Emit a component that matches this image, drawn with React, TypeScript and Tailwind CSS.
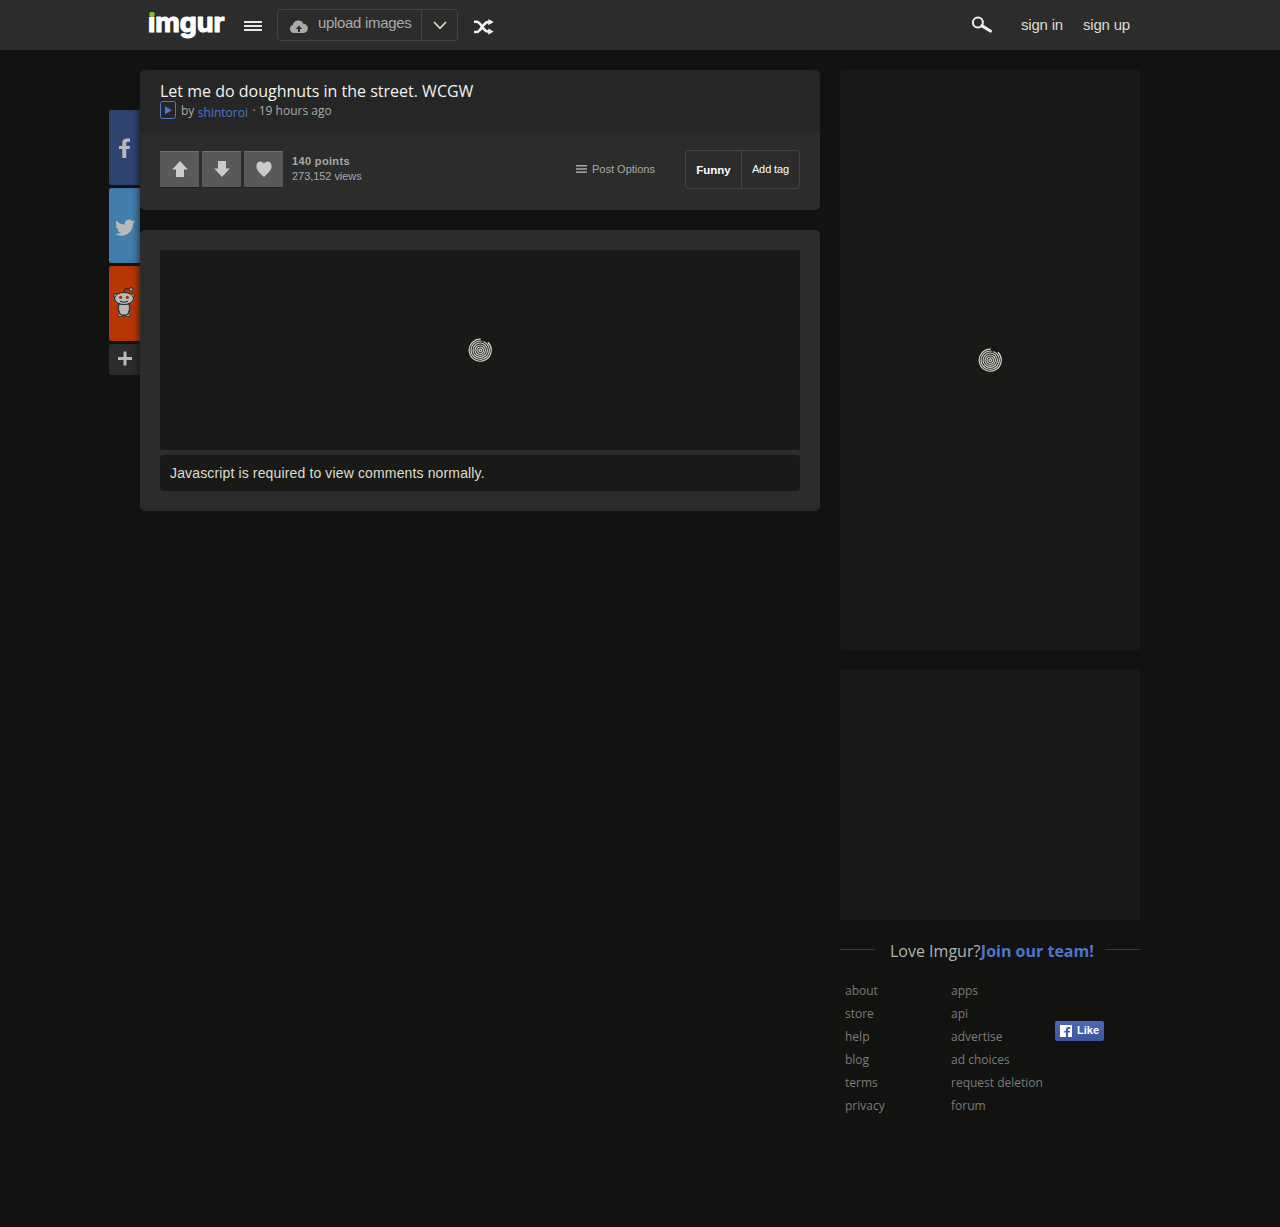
import type { ReactNode } from 'react';

const ABOUT_LINKS = ['about', 'store', 'help', 'blog', 'terms', 'privacy'];
const SITE_LINKS = ['apps', 'api', 'advertise', 'ad choices', 'request deletion', 'forum'];

const SPINNER_RINGS = [1.3, 3.2, 5.2, 7.2, 9.2];

function Logo() {
  return (
    <svg className="w-[76px] h-[30px] overflow-visible" viewBox="0 0 76 30" role="img" aria-label="imgur">
      <text
        x="-1"
        y="21.5"
        textLength="76.5"
        lengthAdjust="spacingAndGlyphs"
        className="font-['Inter',sans-serif] font-bold text-[26px] fill-white stroke-white stroke-[1.2px]"
        strokeLinejoin="round"
      >
        imgur
      </text>
      <rect x="-1" y="-2" width="8" height="9" fill="#2c2c2c" />
      <circle cx="3" cy="4.4" r="2.7" fill="#85bf25" />
    </svg>
  );
}

function Spinner() {
  return (
    <svg className="w-6 h-6" viewBox="-.5 -.5 24 24" fill="none" stroke="#d3d3c6" strokeWidth="1.2">
      {SPINNER_RINGS.map((r) => (
        <circle key={r} cx="11.7" cy="11.7" r={r} />
      ))}
      {/* Outer ring is left open at the top right */}
      <path d="M12.2 .7a11 11 0 1 0 7.2 3.1" />
      <path d="M13.2 2.9l2.2-1.8" stroke="#191918" strokeWidth="2" />
    </svg>
  );
}

function Header() {
  return (
    <header className="h-[50px] bg-[#2c2c2c]">
      <div className="w-[1000px] mx-auto h-full flex items-start">
        <div className="ml-[9px] mt-[10px]">
          <Logo />
        </div>
        <svg className="w-[18px] h-[10px] ml-[19px] mt-[21px]" viewBox="0 0 18 10" fill="#ebe8e8">
          <rect width="18" height="2" rx=".5" />
          <rect y="4" width="18" height="2" rx=".5" />
          <rect y="8" width="18" height="2" rx=".5" />
        </svg>
        <div className="ml-[15px] mt-[9px] w-[181px] h-8 flex border border-[#444442] rounded-[4px]">
          <div className="flex w-[144px] border-r border-[#444442]">
            <svg className="w-[18px] h-[13px] ml-3 mt-[9.5px] shrink-0" viewBox="0 0 18 13">
              <path
                d="M4.2 13A4.1 4.1 0 0 1 2.8 5 5.6 5.6 0 0 1 13.4 3.7 4.7 4.7 0 0 1 14 13Z"
                fill="#a9a9a7"
              />
              <path d="M9 5.4L12.2 9H10v3H8V9H5.8Z" fill="#2c2c2c" />
            </svg>
            <span className="ml-[10px] mt-[3px] text-[15px] leading-5 tracking-[-0.32px] text-[#a9a9a7] whitespace-nowrap">
              upload images
            </span>
          </div>
          <svg className="w-[14px] h-[9px] ml-[10.5px] mt-[11px]" viewBox="0 0 14 9" fill="none">
            <path d="M1 1l6 6.4L13 1" stroke="#dddfcb" strokeWidth="1.6" />
          </svg>
        </div>
        <svg className="w-5 h-4 ml-4 mt-[19px]" viewBox="0 0 20 16" fill="none" stroke="#f2f2f2" strokeWidth="2.6">
          <path d="M0 2.8h2.5c4.8 0 6.2 9.7 11.5 9.7h1" />
          <path d="M0 13h2.5C7.3 13 8.7 3.1 14 3.1h1" />
          <path d="M14.3 0l5.4 3-5.4 3.2zM14.3 9.6l5.4 3-5.4 3.2z" fill="#f2f2f2" stroke="none" />
        </svg>
        <svg className="w-[22px] h-[18px] ml-[477px] mt-[16px]" viewBox="0 0 22 18" fill="none" stroke="#efefef">
          <circle cx="6.9" cy="6.6" r="5" strokeWidth="2" />
          <path d="M11 9.8l8.4 5.2" strokeWidth="3.2" strokeLinecap="round" />
        </svg>
        <nav className="flex gap-5 ml-auto mr-[10px] mt-[15px] text-[15px] leading-5 tracking-[-0.2px] text-[#dddfcb]">
          <a>sign in</a>
          <a>sign up</a>
        </nav>
      </div>
    </header>
  );
}

function ShareTile({ className, children }: { className: string; children: ReactNode }) {
  return (
    <a
      className={`w-[31px] flex justify-center items-center rounded-l-[2px] shadow-[inset_-6px_0_6px_-4px_rgba(0,0,0,0.5)] ${className}`}
    >
      {children}
    </a>
  );
}

function ShareBar() {
  return (
    <aside className="flex flex-col gap-[3px] mt-10 w-[31px] shrink-0">
      <ShareTile className="h-[75px] bg-[#2f4371]">
        <svg className="w-[11px] h-[20px] mt-px" viewBox="0 0 10 20" fill="#b9b9b9" preserveAspectRatio="none">
          <path d="M3 20v-9H0V8h3V5.2C3 2 4.5.5 7.2.5H10v3.2H8.1C7 3.7 6.6 4.2 6.6 5.3V8H10l-.5 3H6.6v9z" />
        </svg>
      </ShareTile>
      <ShareTile className="h-[75px] bg-[#417eac]">
        <svg className="w-[20px] h-[17px] mt-[4px]" viewBox="0 1.5 24 20.5" fill="#b9b9b9" preserveAspectRatio="none">
          <path d="M23.954 4.569a10 10 0 0 1-2.825.775 4.958 4.958 0 0 0 2.163-2.723c-.951.555-2.005.959-3.127 1.184a4.92 4.92 0 0 0-8.384 4.482C7.691 8.094 4.066 6.13 1.64 3.161a4.822 4.822 0 0 0-.666 2.475c0 1.71.87 3.213 2.188 4.096a4.904 4.904 0 0 1-2.228-.616v.061a4.923 4.923 0 0 0 3.946 4.827 4.996 4.996 0 0 1-2.212.085 4.937 4.937 0 0 0 4.604 3.417 9.868 9.868 0 0 1-6.102 2.105c-.39 0-.779-.023-1.17-.067a13.995 13.995 0 0 0 7.557 2.209c9.054 0 13.999-7.496 13.999-13.986 0-.209 0-.42-.015-.63a9.936 9.936 0 0 0 2.46-2.548z" />
        </svg>
      </ShareTile>
      <ShareTile className="h-[75px] bg-[#b93606]">
        <svg className="w-[22px] h-[30px] -mt-[4px] -ml-px" viewBox="0 0 22 30" fill="#b9b9b9" stroke="#222" strokeWidth="1">
          <path d="M11 5.8l1.2-4.5 4.4 1" fill="none" stroke="#3a1a10" />
          <circle cx="18" cy="2.4" r="1.7" />
          <circle cx="3" cy="9" r="2.3" />
          <circle cx="19" cy="9" r="2.3" />
          <ellipse cx="7.6" cy="28" rx="3.3" ry="1.4" />
          <ellipse cx="14.4" cy="28" rx="3.3" ry="1.4" />
          <path d="M6 17c-2.4 1.5-2.5 5.5-.2 7M16 17c2.4 1.5 2.5 5.5.2 7" />
          <path d="M6 17h10c1 4 .4 8-2 11H8c-2.4-3-3-7-2-11z" />
          <ellipse cx="11" cy="11.5" rx="9.4" ry="6" />
          <circle cx="7.6" cy="10.3" r="1.6" fill="#b3220b" stroke="none" />
          <circle cx="14.4" cy="10.3" r="1.6" fill="#b3220b" stroke="none" />
          <path d="M7 14.2q4 2.2 8 0" fill="none" />
        </svg>
      </ShareTile>
      <ShareTile className="h-[31px] bg-[#2c2c2c]">
        <svg className="w-[14px] h-[15px] -mt-[2px] ml-px" viewBox="0 0 14 15" fill="none" stroke="#b9b9b9" strokeWidth="3">
          <path d="M7 .5v14M0 7.5h14" />
        </svg>
      </ShareTile>
    </aside>
  );
}

function VoteButton({ path }: { path: string }) {
  return (
    <button className="w-[39px] h-9 flex items-center justify-center bg-[#595959] border-t border-[#707070] rounded-[1px] shadow-[0_1px_0_#222]">
      <svg className="w-4 h-4 -mt-[2px]" viewBox="0 0 16 16" fill="#cbcbcb">
        <path d={path} />
      </svg>
    </button>
  );
}

function PostCard() {
  return (
    <section className="h-[140px] bg-[#2c2c2c] rounded-[5px] overflow-hidden">
      <div className="h-[62px] pl-5 pt-[10px] bg-[#262626] shadow-[0_0_3px_rgba(0,0,0,0.2)] font-['Open_Sans',sans-serif]">
        <h1 className="text-[16px] leading-[22px] text-[#f2f2f2]">Let me do doughnuts in the street. WCGW</h1>
        <div className="flex text-[12px] leading-4 text-[#a9a9a7] -mt-px">
          <svg className="w-4 h-[18px]" viewBox="0 0 16 18" fill="none" stroke="#4e76c9">
            <rect x=".5" y=".5" width="15" height="17" rx="2" />
            <path d="M5 5.2l7 4-7 4z" fill="#4e76c9" stroke="none" />
          </svg>
          <span className="ml-[5px] mt-[2px]">by</span>
          <a className="ml-[3.5px] mt-[4px] text-[#4e76c9]">shintoroi</a>
          <span className="ml-[4.5px] mt-[2px]">· 19 hours ago</span>
        </div>
      </div>
      <div className="flex px-5 pt-[18px]">
        <div className="flex gap-[3px] pt-px">
          <VoteButton path="M8 0l7.8 8.4H12V16H4V8.400H.2z" />
          <VoteButton path="M8 16l7.8-8.400H12V0H4v7.600H.2z" />
          <VoteButton path="M8 16C4.5 12.800.4 9.500.4 5 .4 0 6-.9 8 2.8 10-.9 15.6 0 15.6 5c0 4.500-4.100 7.800-7.600 11z" />
        </div>
        <div className="ml-[9px] mt-[4px] text-[11px] leading-[15px] text-[#a9a9a7]">
          <div className="font-bold tracking-[0.35px]">140 points</div>
          <div className="tracking-[-0.05px]">273,152 views</div>
        </div>
        <div className="ml-auto mr-[30px] mt-[12px] flex text-[11px] leading-[15px] text-[#a9a9a7]">
          <svg className="w-[11px] h-[8px] mt-[3px] mr-[5px]" viewBox="0 0 11 8" fill="#a9a9a7">
            <rect width="11" height="1.5" />
            <rect y="3.2" width="11" height="1.5" />
            <rect y="6.4" width="11" height="1.5" />
          </svg>
          Post Options
        </div>
        <div className="w-[115px] h-[39px] flex items-center border border-[#444442] rounded-[4px] text-white">
          <span className="w-[56px] h-full flex items-center justify-center border-r border-[#444442] text-[11.5px] font-bold pt-[2px]">
            Funny
          </span>
          <span className="flex-1 text-center text-[11px] tracking-[-0.1px]">Add tag</span>
        </div>
      </div>
    </section>
  );
}

function MediaCard() {
  return (
    <section className="mt-5 p-5 bg-[#2c2c2c] rounded-[5px]">
      <div className="h-[200px] flex items-center justify-center bg-[#191918]">
        <Spinner />
      </div>
      <p className="mt-[5px] h-9 px-[10px] bg-[#191918] rounded-[4px] text-[14px] leading-9 tracking-[0.14px] text-[#dddfcb]">
        Javascript is required to view comments normally.
      </p>
    </section>
  );
}

function LinkColumn({ links, className }: { links: string[]; className: string }) {
  return (
    <ul className={className}>
      {links.map((link) => (
        <li key={link} className="h-[23px]">
          {link}
        </li>
      ))}
    </ul>
  );
}

function Sidebar() {
  return (
    <aside className="w-[300px] ml-5 font-['Open_Sans',sans-serif]">
      <div className="h-[580px] flex items-center justify-center rounded-[3px] bg-[#191918]">
        <Spinner />
      </div>
      <div className="mt-5 h-[250px] bg-[#191918]" />
      <div className="mt-5 flex items-start text-[16px] leading-[22px] text-[#b3b3b0]">
        <span className="w-[35px] h-px mt-[9px] bg-[#3a3a38]" />
        <span className="ml-[15px] whitespace-nowrap">
          Love Imgur?<b className="ml-[0.5px] font-bold text-[#4e76c9]">Join our team!</b>
        </span>
        <span className="w-[35px] h-px mt-[9px] ml-auto bg-[#3a3a38]" />
      </div>
      <div className="flex mt-[21px] pl-[5px] text-[12px] leading-4 text-[#7b7b79]">
        <LinkColumn links={ABOUT_LINKS} className="w-[106px]" />
        <LinkColumn links={SITE_LINKS} className="w-[104px]" />
        <button className="mt-[38px] w-[49px] h-5 flex items-center pl-[5px] rounded-[2px] bg-linear-to-b from-[#4c69ba] to-[#3b55a0] text-white font-['Liberation_Sans',Arial,sans-serif] text-[11px] font-bold">
          <svg className="w-3 h-3 mr-[5px]" viewBox="0 0 12 12">
            <rect width="12" height="12" rx=".6" fill="#fff" />
            <path
              d="M6 12V7.6H4.3V5.7H6V4.6C6 2.9 7 2 8.5 2h1.700v1.900H9c-.7 0-1 .3-1 .9v.9h2.100l-.3 1.900H8V12z"
              fill="#415cab"
            />
          </svg>
          <span className="-mt-[2px]">Like</span>
        </button>
      </div>
    </aside>
  );
}

export default function App() {
  return (
    <div className="min-h-[1227px] bg-[#121211] font-['Liberation_Sans',Arial,sans-serif]">
      <Header />
      <div className="flex items-start w-[1031px] ml-[109px] pt-5">
        <ShareBar />
        <main className="w-[680px] shrink-0">
          <PostCard />
          <MediaCard />
        </main>
        <Sidebar />
      </div>
    </div>
  );
}
